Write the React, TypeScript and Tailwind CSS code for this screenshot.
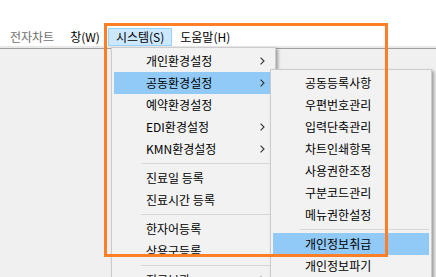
import React from "react"

type Item = { label?: string; sub?: boolean; active?: boolean; sep?: boolean }

const mainMenu: Item[] = [
  { label: "개인환경설정", sub: true },
  { label: "공동환경설정", sub: true, active: true },
  { label: "예약환경설정" },
  { label: "EDI환경설정", sub: true },
  { label: "KMN환경설정", sub: true },
  { sep: true },
  { label: "진료일 등록" },
  { label: "진료시간 등록" },
  { sep: true },
  { label: "한자어등록" },
  { label: "상용구등록" },
  { sep: true },
  { label: "진료보관", sub: true },
]

const subMenu: Item[] = [
  { label: "공동등록사항" },
  { label: "우편번호관리" },
  { label: "입력단축관리" },
  { label: "차트인쇄항목" },
  { label: "사용권한조정" },
  { label: "구분코드관리" },
  { label: "메뉴권한설정" },
  { sep: true },
  { label: "개인정보취급", active: true },
  { label: "개인정보파기" },
]

function Chevron() {
  return (
    <svg width="5" height="8" viewBox="0 0 5 8" fill="none" stroke="#333333" strokeWidth="1.1">
      <polyline points="0.6,0.6 4,4 0.6,7.4" />
    </svg>
  )
}

function MenuList({ items }: { items: Item[] }) {
  return (
    <div className="flex flex-col">
      {items.map((it, i) =>
        it.sep ? (
          <div key={i} className="h-[7px] flex items-center pl-[27px]">
            <div className="h-px w-full bg-[#d7d7d7]" />
          </div>
        ) : (
          <div
            key={i}
            className={`h-[22px] flex items-center justify-between pl-[32px] pr-[8px] pb-px whitespace-nowrap ${it.active ? "bg-[#91c9f7]" : ""}`}
          >
            <span>{it.label}</span>
            {it.sub && <Chevron />}
          </div>
        )
      )}
    </div>
  )
}

export default function App() {
  return (
    <div className="relative w-[436px] h-[277px] overflow-hidden bg-[#f0f0f0] text-[12px] leading-[16px] text-black font-['Noto_Sans_CJK_KR','Noto_Sans',sans-serif]">
      {/* Menu bar */}
      <div className="h-[46px] bg-white flex items-end">
        <div className="flex h-[18px] ml-[2px]">
          <div className="flex items-center px-[7px] border border-transparent text-[#6e6e6e]">전자차트</div>
          <div className="flex items-center px-[7px] border border-transparent">창(W)</div>
          <div className="flex items-center px-[7px] border border-[#99d1ff] bg-[#cce8ff]">시스템(S)</div>
          <div className="flex items-center px-[7px] border border-transparent">도움말(H)</div>
        </div>
      </div>
      <div className="h-[2px] bg-[#e9e9e9]" />
      <div className="h-px bg-[#a0a0a0]" />

      {/* 시스템 dropdown */}
      <div className="absolute left-[111px] top-[47px] w-[165px] border border-[#cccccc] bg-[#f2f2f2] p-[2px] shadow-[2px_2px_3px_rgba(0,0,0,0.35)]">
        <MenuList items={mainMenu} />
      </div>

      {/* 공동환경설정 submenu */}
      <div className="absolute left-[270px] top-[69px] w-[162px] border border-[#cccccc] bg-[#f2f2f2] p-[2px] shadow-[2px_2px_3px_rgba(0,0,0,0.35)]">
        <MenuList items={subMenu} />
      </div>

      {/* annotation box */}
      <div className="pointer-events-none absolute left-[104px] top-[23px] w-[284px] h-[234px] border-[3px] border-[#ff7f27]" />
    </div>
  )
}
